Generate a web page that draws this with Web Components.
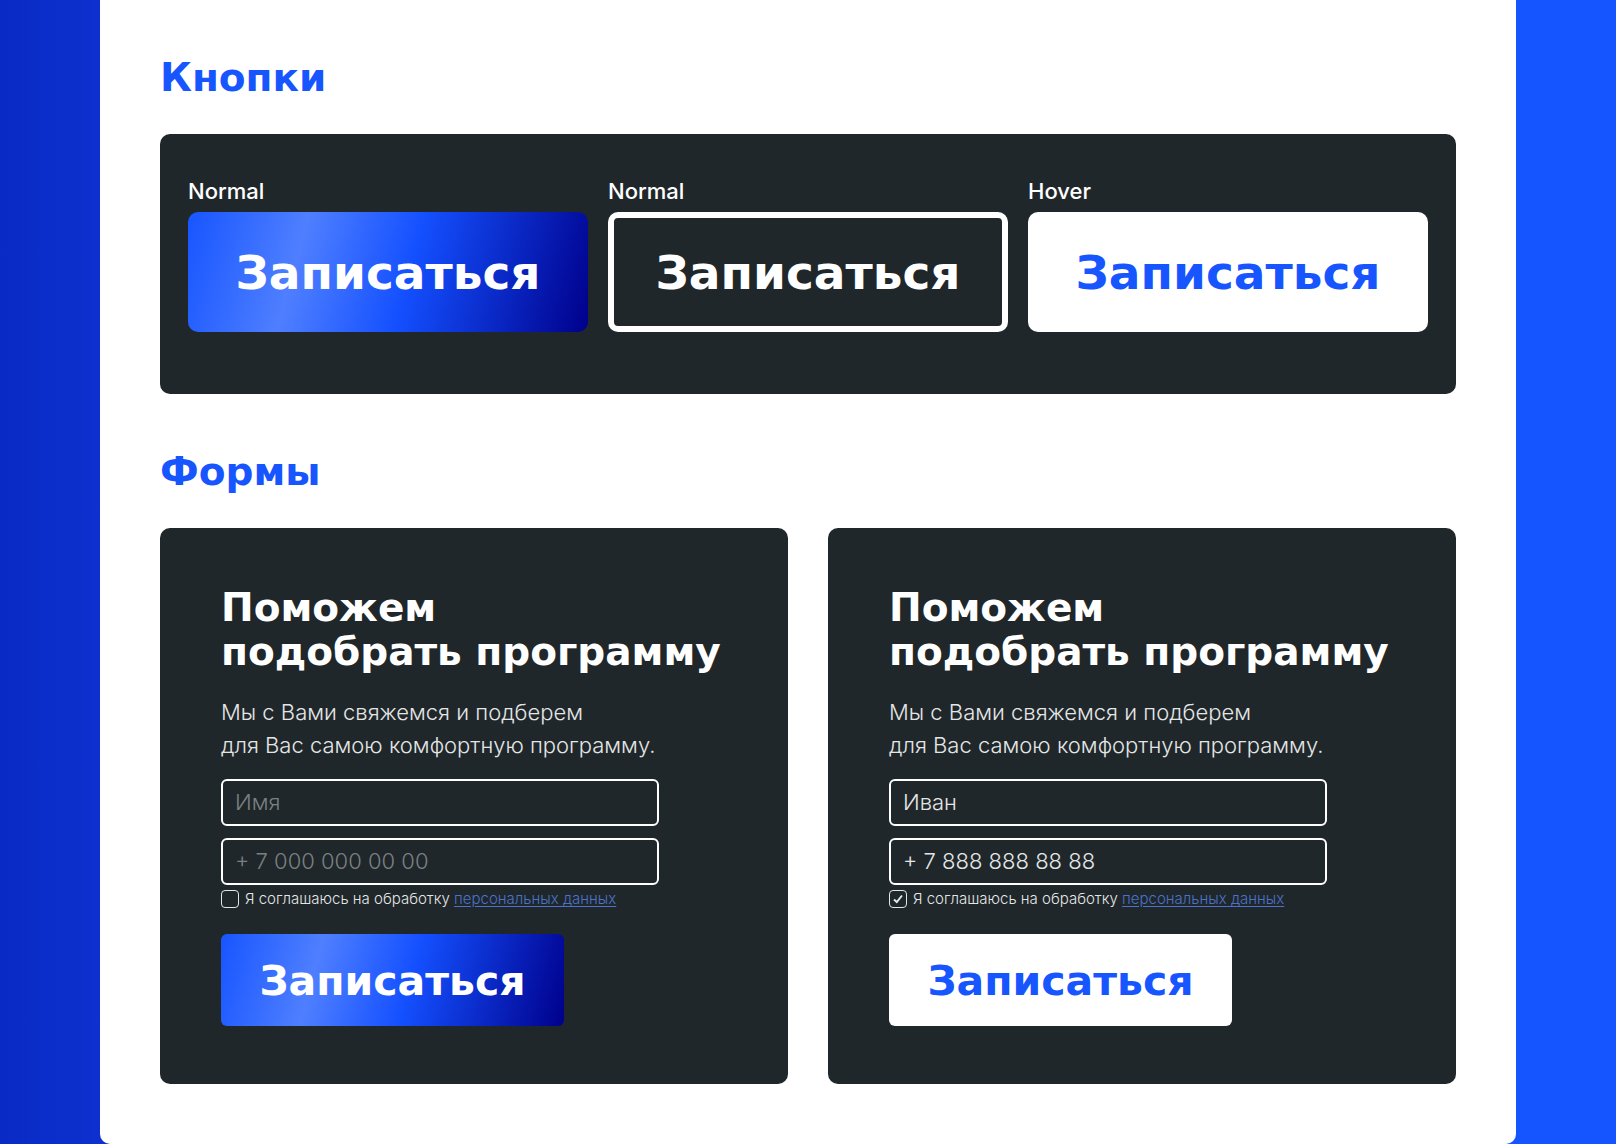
<!DOCTYPE html>
<html lang="ru">
<head>
<meta charset="utf-8">
<meta name="viewport" content="width=device-width, initial-scale=1">
<title>UI Kit</title>
<style>
  :root {
    --blue: #1755ff;
    --dark: #1f272a;
    --display: "DejaVu Sans", sans-serif;
    --text: Inter, "Open Sans", sans-serif;
  }
  body {
    margin: 0;
    min-height: 100vh;
    background: linear-gradient(to right, #092ac4, #0d30ce 6%, #1555ff 60%);
    font-family: var(--text);
  }
</style>
</head>
<body>
<kit-sheet>
  <kit-section heading="Кнопки">
    <kit-panel>
      <kit-row>
        <button-sample caption="Normal"><kit-button look="gradient">Записаться</kit-button></button-sample>
        <button-sample caption="Normal"><kit-button look="outline">Записаться</kit-button></button-sample>
        <button-sample caption="Hover"><kit-button look="white">Записаться</kit-button></button-sample>
      </kit-row>
    </kit-panel>
  </kit-section>
  <kit-section heading="Формы">
    <kit-row wide>
      <signup-form look="gradient"></signup-form>
      <signup-form look="white" name="Иван" phone="+ 7 888 888 88 88" agreed></signup-form>
    </kit-row>
  </kit-section>
</kit-sheet>
<script>
  function define(tag, render) {
    customElements.define(tag, class extends HTMLElement {
      connectedCallback() {
        if (this.shadowRoot) return;
        this.attachShadow({ mode: 'open' }).innerHTML = render(this);
      }
    });
  }

  define('kit-sheet', () => `
    <style>
      :host { display: flex; flex-direction: column; gap: 56px; margin: 0 100px;
        padding: 56px 60px 60px; background: #fff; border-radius: 0 0 10px 10px; }
    </style>
    <slot></slot>`);

  define('kit-section', el => `
    <style>
      :host { display: flex; flex-direction: column; gap: 34px; }
      h2 { margin: 0; font: 700 39px/44px var(--display); color: var(--blue); }
    </style>
    <h2>${el.getAttribute('heading')}</h2>
    <slot></slot>`);

  define('kit-panel', () => `
    <style>
      :host { display: block; padding: 43px 28px 62px; background: var(--dark); border-radius: 10px; }
    </style>
    <slot></slot>`);

  define('kit-row', () => `
    <style>
      :host { display: grid; grid-auto-flow: column; grid-auto-columns: minmax(0, 1fr); gap: 20px; }
      :host([wide]) { gap: 40px; }
    </style>
    <slot></slot>`);

  define('button-sample', el => `
    <style>
      :host { display: flex; flex-direction: column; gap: 7px; }
      span { font: 500 22px/28px var(--text); color: #fff; }
    </style>
    <span>${el.getAttribute('caption')}</span>
    <slot></slot>`);

  define('kit-button', () => `
    <style>
      :host { display: block; height: 120px; --size: 47px; --radius: 10px; }
      :host([small]) { height: 92px; width: 343px; --size: 41px; --radius: 6px; }
      button { box-sizing: border-box; display: block; width: 100%; height: 100%; margin: 0; padding: 2px 0 0;
        border: 0; border-radius: var(--radius); font: 700 var(--size)/56px var(--display); cursor: pointer; }
      :host([look="gradient"]) button { color: #fff;
        background: linear-gradient(105deg, #1755ff, #4f7fff 28%, #1450ff 55%, #00008b); }
      :host([look="outline"]) button { color: #fff; background: none; border: 6px solid #fff; }
      :host([look="white"]) button { color: var(--blue); background: #fff; }
    </style>
    <button type="button"><slot></slot></button>`);

  define('kit-field', el => `
    <style>
      :host { display: block; }
      input { box-sizing: border-box; display: block; width: 100%; height: 47px; margin: 0; padding: 0 12px 2px;
        border: 2px solid #fff; border-radius: 6px; background: none; color: #e4e6e6;
        font: 300 22px/28px var(--text); outline: 0; }
      input::placeholder { color: #7b8082; opacity: 1; }
    </style>
    <input type="${el.getAttribute('type')}" aria-label="${el.getAttribute('hint')}"
      placeholder="${el.getAttribute('hint')}" value="${el.getAttribute('value') || ''}">`);

  define('kit-consent', el => `
    <style>
      :host { display: flex; align-items: center; gap: 6px; font: 300 15px/20px var(--text); color: #e4e6e6; }
      .box { display: grid; width: 18px; height: 18px; }
      .box > * { grid-area: 1 / 1; }
      input { appearance: none; box-sizing: border-box; width: 18px; height: 18px; margin: 0;
        border: 1px solid #e4e6e6; border-radius: 4px; }
      svg { display: none; width: 18px; height: 18px; pointer-events: none; }
      input:checked + svg { display: block; }
      a { color: #4c72cc; text-decoration: underline; text-underline-offset: 2px; }
    </style>
    <span class="box">
      <input id="agree" type="checkbox" ${el.hasAttribute('checked') ? 'checked' : ''}>
      <svg viewBox="0 0 18 18" fill="none" stroke="#e4e6e6" stroke-width="2"><path d="M5 9.5 7.8 12 13 5.5"/></svg>
    </span>
    <label for="agree">Я соглашаюсь на обработку <a href="#privacy">персональных данных</a></label>`);

  define('signup-form', el => `
    <style>
      :host { display: block; padding: 58px 61px; background: var(--dark); border-radius: 10px; }
      form { display: flex; flex-direction: column; align-items: flex-start; }
      h3 { margin: 0; font: 700 39px/44px var(--display); color: #fff; white-space: nowrap; }
      p { margin: 22px 0 17px; font: 300 22px/33px var(--text); color: #e4e6e6; }
      .fields { display: flex; flex-direction: column; gap: 12px; width: 100%; max-width: 438px; }
      kit-consent { margin: 4px 0 25px; }
    </style>
    <form>
      <h3>Поможем<br>подобрать программу</h3>
      <p>Мы с Вами свяжемся и подберем<br>для Вас самою комфортную программу.</p>
      <div class="fields">
        <kit-field type="text" hint="Имя" value="${el.getAttribute('name') || ''}"></kit-field>
        <kit-field type="tel" hint="+ 7 000 000 00 00" value="${el.getAttribute('phone') || ''}"></kit-field>
      </div>
      <kit-consent ${el.hasAttribute('agreed') ? 'checked' : ''}></kit-consent>
      <kit-button small look="${el.getAttribute('look')}">Записаться</kit-button>
    </form>`);
</script>
</body>
</html>
